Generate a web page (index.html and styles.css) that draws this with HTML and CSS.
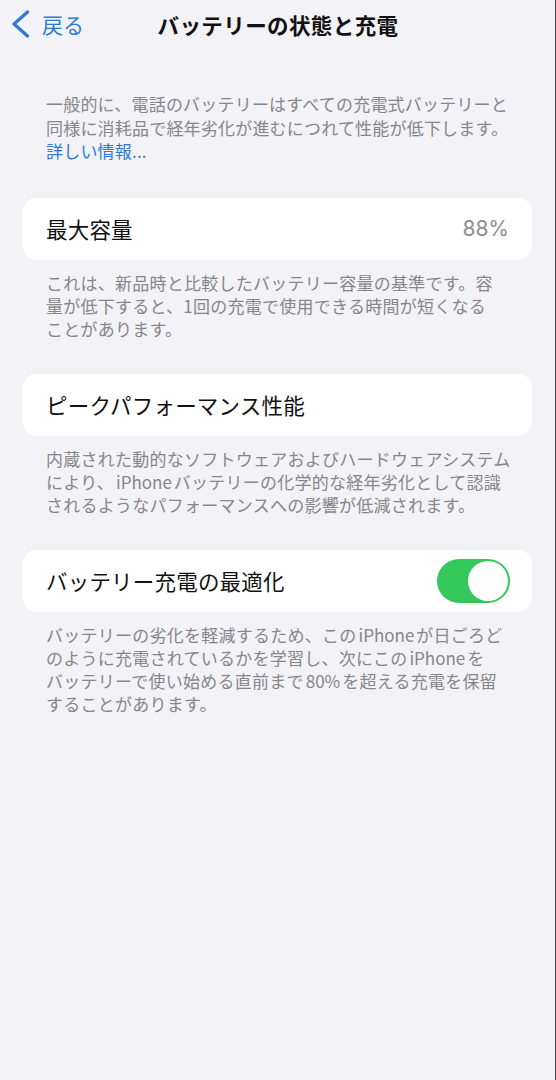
FILE: index.html
```html
<!DOCTYPE html>
<html lang="ja">
<head>
<meta charset="utf-8">
<title>バッテリーの状態と充電</title>
<link rel="stylesheet" href="styles.css">
</head>
<body>
<div class="page">
  <header class="nav">
    <a class="back">
      <svg class="chev" width="20" height="28" viewBox="0 0 20 28"><polyline points="17.5,2 4,14 17.5,26" fill="none" stroke="#2c7bd6" stroke-width="3.2" stroke-linecap="round" stroke-linejoin="round"/></svg>
      <span class="back-label">戻る</span>
    </a>
    <h1 class="title">バッテリーの状態と充電</h1>
    <span></span>
  </header>

  <p class="intro">一般的に、電話のバッテリーはすべての充電式バッテリーと<br>同様に消耗品で経年劣化が進むにつれて性能が低下します。<br><a class="link">詳しい情報...</a></p>

  <section class="group first">
    <div class="card">
      <span class="label">最大容量</span>
      <span class="value">88%</span>
    </div>
    <p class="foot">これは、新品時と比較したバッテリー容量の基準です。容<br>量が低下すると、1回の充電で使用できる時間が短くなる<br>ことがあります。</p>
  </section>

  <section class="group">
    <div class="card">
      <span class="label">ピークパフォーマンス性能</span>
    </div>
    <p class="foot">内蔵された動的なソフトウェアおよびハードウェアシステム<br>により、<span class="en">iPhone</span>バッテリーの化学的な経年劣化として認識<br>されるようなパフォーマンスへの影響が低減されます。</p>
  </section>

  <section class="group">
    <div class="card">
      <span class="label">バッテリー充電の最適化</span>
      <span class="toggle"><span class="knob"></span></span>
    </div>
    <p class="foot">バッテリーの劣化を軽減するため、この<span class="en">iPhone</span>が日ごろど<br>のように充電されているかを学習し、次にこの<span class="en">iPhone</span>を<br>バッテリーで使い始める直前まで<span class="en">80%</span>を超える充電を保留<br>することがあります。</p>
  </section>
</div>
</body>
</html>
```

FILE: styles.css
```css
* { box-sizing: border-box; }
html, body {
  margin: 0;
  padding: 0;
  background: #f2f2f7;
}
body {
  font-family: "Noto Sans CJK JP", "Noto Sans", sans-serif;
  color: #111;
}
.page {
  width: 556px;
  min-height: 1080px;
  box-shadow: inset -1px 0 0 #4a4a52;
  padding-bottom: 40px;
}
.nav {
  height: 48px;
  display: grid;
  grid-template-columns: 1fr auto 1fr;
  align-items: center;
}
.back {
  display: flex;
  align-items: center;
  padding-left: 10px;
  color: #2c7bd6;
}
.chev { display: block; }
.back-label {
  font-size: 21px;
  margin-left: 12px;
  line-height: 1;
}
.title {
  margin: 0;
  font-size: 21.5px;
  font-weight: 700;
  letter-spacing: 0.4px;
  color: #111;
}
.intro {
  margin: 44px 0 0;
  padding: 0 10px 0 46px;
  font-size: 17px;
  line-height: 23.5px;
  letter-spacing: 0.2px;
  color: #86868b;
  white-space: nowrap;
}
.link { color: #2c7bd6; }
.group { margin-top: 34px; }
.group.first { margin-top: 35px; }
.card {
  margin: 0 24px 0 23px;
  height: 62px;
  background: #fff;
  border-radius: 14px;
  display: flex;
  align-items: center;
  justify-content: space-between;
  padding: 0 22px 0 23px;
}
.label {
  font-size: 21.5px;
  letter-spacing: 0.2px;
  color: #111;
}
.value {
  font-size: 21px;
  color: #8e8e93;
  font-family: "Inter", "Noto Sans", sans-serif;
  padding-right: 1px;
}
.toggle {
  width: 73px;
  height: 44px;
  border-radius: 22px;
  background: #34c759;
  display: flex;
  justify-content: flex-end;
  align-items: center;
  padding: 2px;
}
.knob {
  width: 40px;
  height: 40px;
  border-radius: 50%;
  background: #fff;
}
.foot {
  margin: 11px 0 0;
  padding: 0 10px 0 46px;
  font-size: 17px;
  line-height: 23px;
  letter-spacing: 0.25px;
  color: #86868b;
  white-space: nowrap;
}
.en { margin: 0 2px; letter-spacing: 0; }
```
